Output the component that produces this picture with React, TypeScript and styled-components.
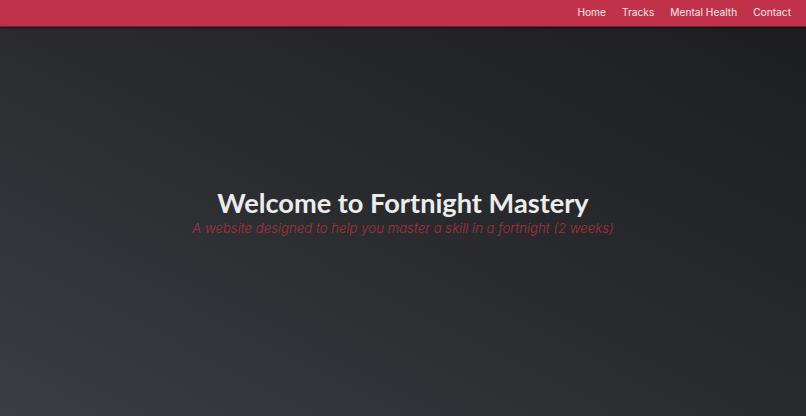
import React from "react";
import styled, { createGlobalStyle } from "styled-components";

const Global = createGlobalStyle`
  html, body { margin: 0; padding: 0; height: 100%; }
  body { background: #2a2c30; }
  #root { height: 100%; }
`;

const Page = styled.div`
  width: 806px;
  height: 416px;
  display: flex;
  flex-direction: column;
  overflow: hidden;
  background: linear-gradient(to top right, #3a3d42 0%, #2a2c30 45%, #1c1d1f 100%);
`;

const NavBar = styled.nav`
  height: 27px;
  box-sizing: border-box;
  flex: 0 0 auto;
  background: #c1324a;
  border-bottom: 1px solid #7a1f2e;
  box-shadow: 0 1px 2px rgba(0, 0, 0, 0.5);
  display: flex;
  align-items: center;
  justify-content: flex-end;
  padding: 0 15px 3px 0;
  gap: 16px;
`;

const NavLink = styled.a`
  font-family: "Inter", "Noto Sans", sans-serif;
  font-size: 10.2px;
  color: #f4e6e8;
  text-decoration: none;
`;

const Hero = styled.main`
  flex: 1;
  display: flex;
  flex-direction: column;
  align-items: center;
  justify-content: center;
  padding-bottom: 20px;
`;

const Title = styled.h1`
  margin: 0;
  font-family: "Lato", "Noto Sans", sans-serif;
  font-weight: 700;
  font-size: 27.2px;
  line-height: 32px;
  color: #ececec;
`;

const Subtitle = styled.p`
  margin: 0;
  font-family: "Inter", "Noto Sans", sans-serif;
  font-style: italic;
  font-weight: 300;
  font-size: 13.2px;
  line-height: 18px;
  color: #a8303f;
`;

export default function App() {
  return (
    <>
      <Global />
      <Page>
        <NavBar>
          <NavLink href="#">Home</NavLink>
          <NavLink href="#">Tracks</NavLink>
          <NavLink href="#">Mental Health</NavLink>
          <NavLink href="#">Contact</NavLink>
        </NavBar>
        <Hero>
          <Title>Welcome to Fortnight Mastery</Title>
          <Subtitle>A website designed to help you master a skill in a fortnight (2 weeks)</Subtitle>
        </Hero>
      </Page>
    </>
  );
}
